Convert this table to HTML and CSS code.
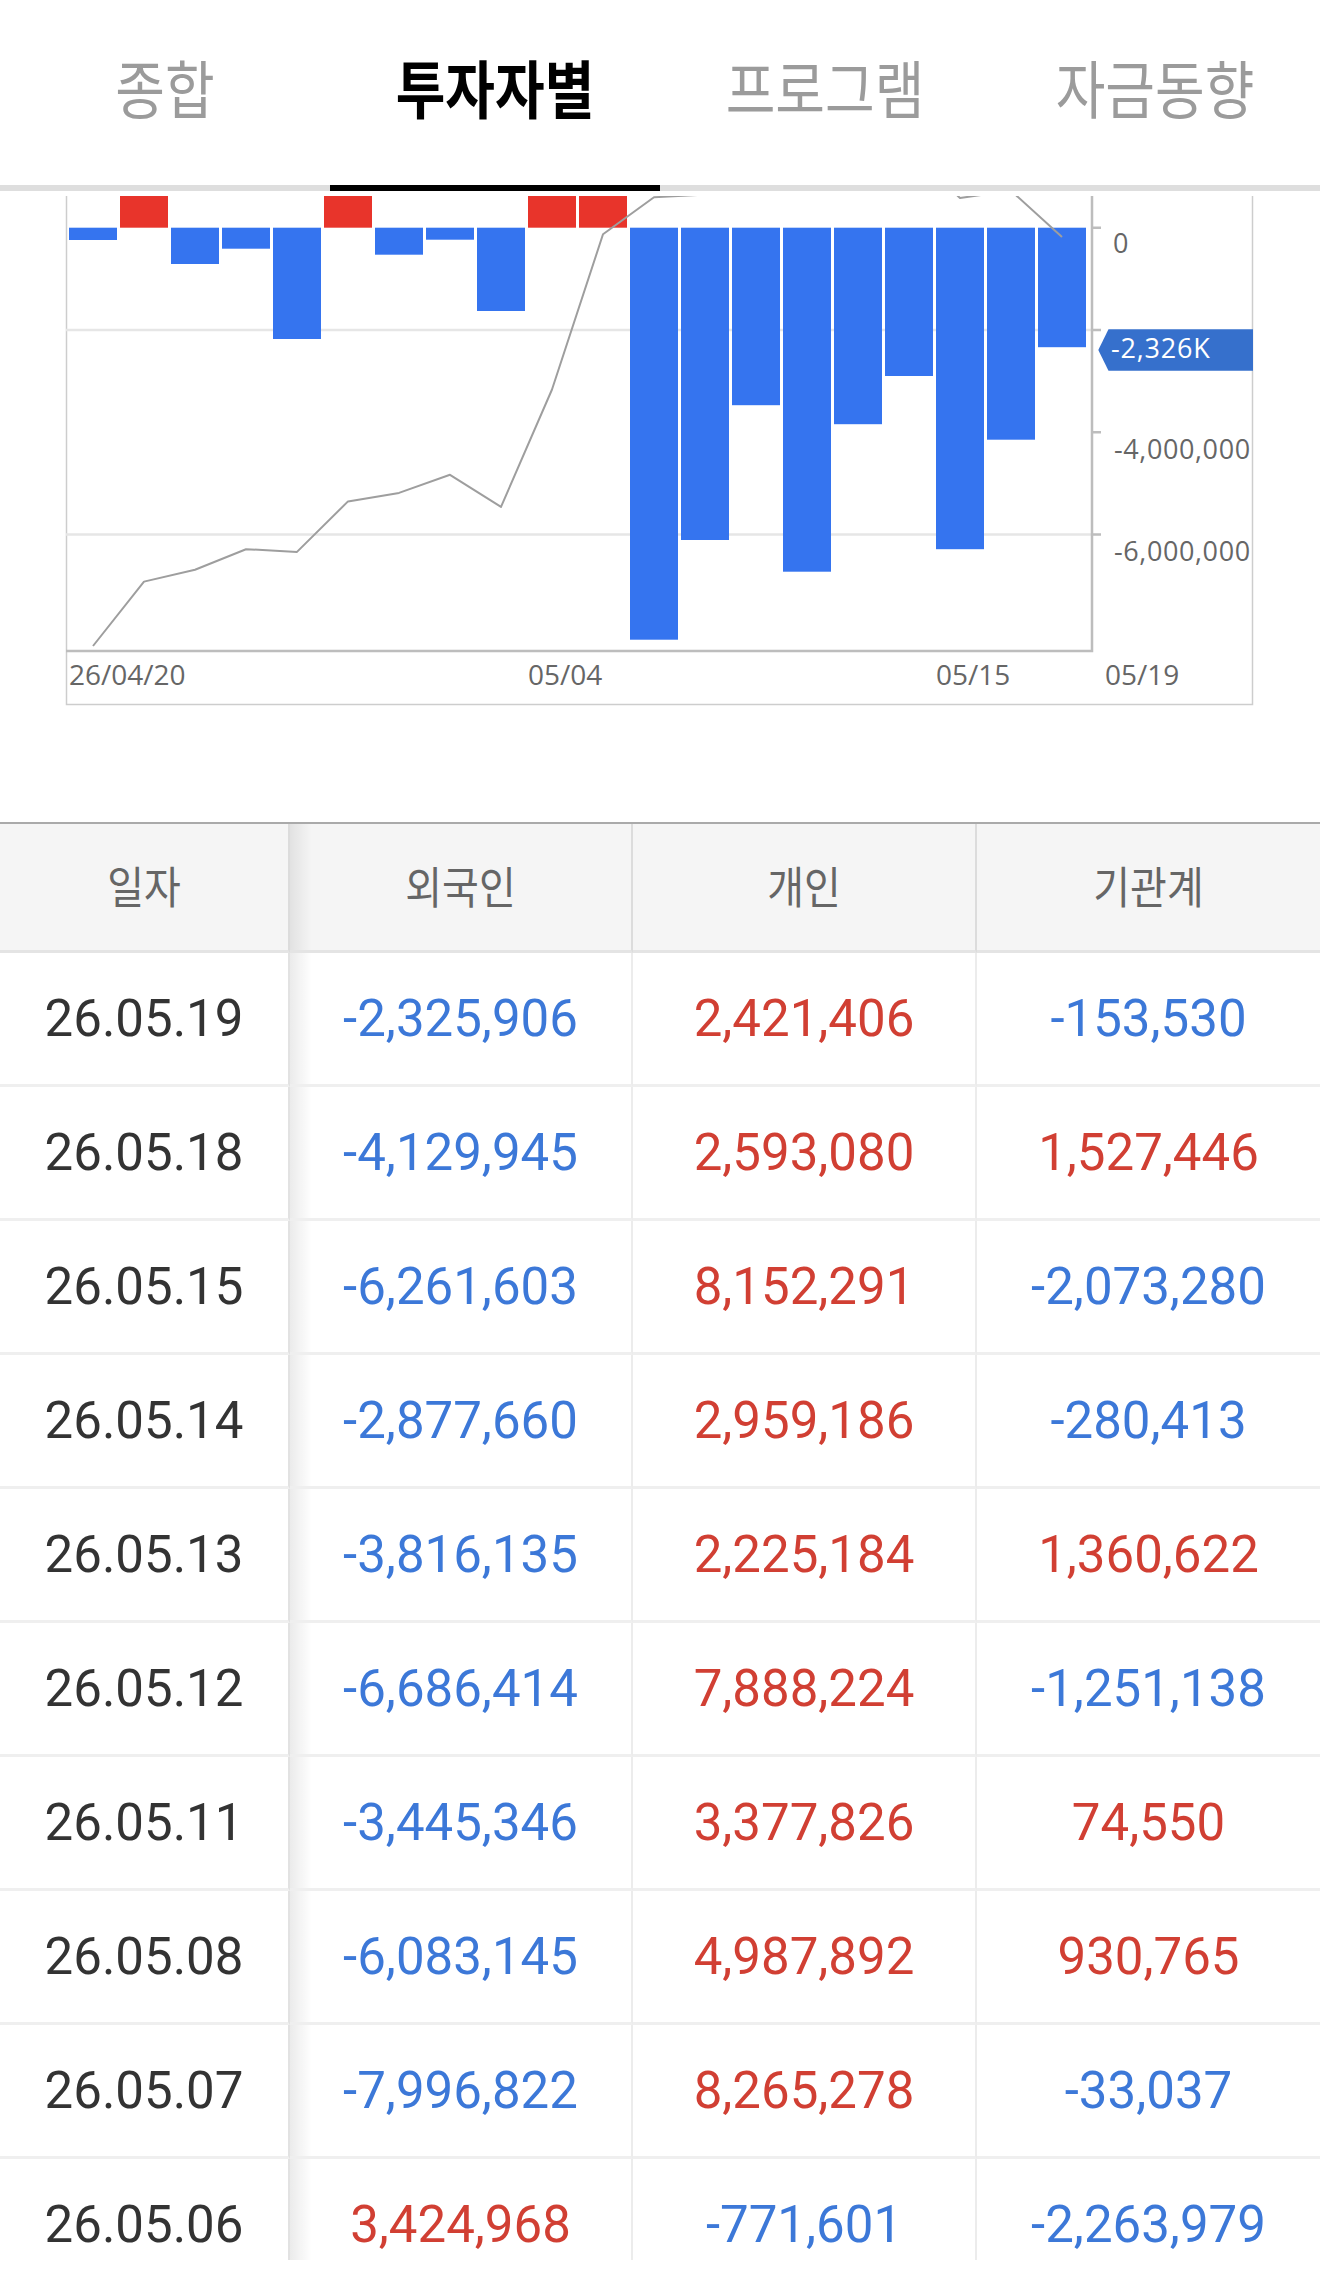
FILE: index.html
```html
<!DOCTYPE html>
<html lang="ko">
<head>
<meta charset="utf-8">
<title>투자자별</title>
<link rel="stylesheet" href="styles.css">
</head>
<body>
<nav class="tabs">
  <div class="tab"><span>종합</span></div>
  <div class="tab active"><span>투자자별</span></div>
  <div class="tab"><span>프로그램</span></div>
  <div class="tab"><span>자금동향</span></div>
</nav>
<div class="track"><div class="indicator"></div></div>

<svg class="chart" viewBox="0 196 1320 626" xmlns="http://www.w3.org/2000/svg">
  <path class="box" d="M66.5 190 V704.5 H1252.5 V190"/>
  <path class="gridline" d="M66 330 H1092 M66 534.6 H1092"/>
  <g class="bars">
    <rect class="neg" x="69" y="227.7" width="48" height="12.3"/>
    <rect class="pos" x="120" y="150" width="48" height="77.7"/>
    <rect class="neg" x="171" y="227.7" width="48" height="36.3"/>
    <rect class="neg" x="222" y="227.7" width="48" height="21"/>
    <rect class="neg" x="273" y="227.7" width="48" height="111.3"/>
    <rect class="pos" x="324" y="150" width="48" height="77.7"/>
    <rect class="neg" x="375" y="227.7" width="48" height="27"/>
    <rect class="neg" x="426" y="227.7" width="48" height="12"/>
    <rect class="neg" x="477" y="227.7" width="48" height="83.3"/>
    <rect class="pos" x="528" y="150" width="48" height="77.7"/>
    <rect class="pos" x="579" y="150" width="48" height="77.7"/>
    <rect class="neg" x="630" y="227.7" width="48" height="412"/>
    <rect class="neg" x="681" y="227.7" width="48" height="312.3"/>
    <rect class="neg" x="732" y="227.7" width="48" height="177.5"/>
    <rect class="neg" x="783" y="227.7" width="48" height="344"/>
    <rect class="neg" x="834" y="227.7" width="48" height="196.5"/>
    <rect class="neg" x="885" y="227.7" width="48" height="148.3"/>
    <rect class="neg" x="936" y="227.7" width="48" height="321.5"/>
    <rect class="neg" x="987" y="227.7" width="48" height="212"/>
    <rect class="neg" x="1038" y="227.7" width="48" height="119.5"/>
  </g>
  <polyline class="trend" points="93,646 144,581.6 195,569.7 246,549.2 297,551.9 348,501.4 399,492.9 450,474.8 501,506.9 552,389.5 603,234.3 654,197.3 705,194.6 756,150 807,165 858,140 909,150 960,198 1011,190.7 1062,237"/>
  <path class="axis" d="M1092 190 V651 H66"/>
  <path class="tick" d="M1092 227.7 H1101 M1092 330 H1101 M1092 432.3 H1101 M1092 534.6 H1101"/>
  <text class="ylabel" x="1113" y="253">0</text>
  <text class="ylabel" x="1114" y="459">-4,000,000</text>
  <text class="ylabel" x="1114" y="561">-6,000,000</text>
  <polygon class="flag" points="1098.3,350 1108.5,329.3 1253,329.3 1253,370.7 1108.5,370.7"/>
  <text class="flag-text" x="1111" y="358">-2,326K</text>
  <text class="xlabel" x="69" y="685">26/04/20</text>
  <text class="xlabel" x="528" y="685">05/04</text>
  <text class="xlabel" x="936" y="685">05/15</text>
  <text class="xlabel" x="1105" y="685">05/19</text>
</svg>

<section class="grid-table">
  <div class="row head">
    <div class="cell c1"><span>일자</span></div>
    <div class="cell c2"><span>외국인</span></div>
    <div class="cell c3"><span>개인</span></div>
    <div class="cell c4"><span>기관계</span></div>
  </div>
  <div class="row">
    <div class="cell c1 date">26.05.19</div>
    <div class="cell c2 down">-2,325,906</div>
    <div class="cell c3 up">2,421,406</div>
    <div class="cell c4 down">-153,530</div>
  </div>
  <div class="row">
    <div class="cell c1 date">26.05.18</div>
    <div class="cell c2 down">-4,129,945</div>
    <div class="cell c3 up">2,593,080</div>
    <div class="cell c4 up">1,527,446</div>
  </div>
  <div class="row">
    <div class="cell c1 date">26.05.15</div>
    <div class="cell c2 down">-6,261,603</div>
    <div class="cell c3 up">8,152,291</div>
    <div class="cell c4 down">-2,073,280</div>
  </div>
  <div class="row">
    <div class="cell c1 date">26.05.14</div>
    <div class="cell c2 down">-2,877,660</div>
    <div class="cell c3 up">2,959,186</div>
    <div class="cell c4 down">-280,413</div>
  </div>
  <div class="row">
    <div class="cell c1 date">26.05.13</div>
    <div class="cell c2 down">-3,816,135</div>
    <div class="cell c3 up">2,225,184</div>
    <div class="cell c4 up">1,360,622</div>
  </div>
  <div class="row">
    <div class="cell c1 date">26.05.12</div>
    <div class="cell c2 down">-6,686,414</div>
    <div class="cell c3 up">7,888,224</div>
    <div class="cell c4 down">-1,251,138</div>
  </div>
  <div class="row">
    <div class="cell c1 date">26.05.11</div>
    <div class="cell c2 down">-3,445,346</div>
    <div class="cell c3 up">3,377,826</div>
    <div class="cell c4 up">74,550</div>
  </div>
  <div class="row">
    <div class="cell c1 date">26.05.08</div>
    <div class="cell c2 down">-6,083,145</div>
    <div class="cell c3 up">4,987,892</div>
    <div class="cell c4 up">930,765</div>
  </div>
  <div class="row">
    <div class="cell c1 date">26.05.07</div>
    <div class="cell c2 down">-7,996,822</div>
    <div class="cell c3 up">8,265,278</div>
    <div class="cell c4 down">-33,037</div>
  </div>
  <div class="row">
    <div class="cell c1 date">26.05.06</div>
    <div class="cell c2 up">3,424,968</div>
    <div class="cell c3 down">-771,601</div>
    <div class="cell c4 down">-2,263,979</div>
  </div>
</section>
</body>
</html>
```

FILE: styles.css
```css
* {
  box-sizing: border-box;
}

html,
body {
  margin: 0;
  padding: 0;
  background: #fff;
}

body {
  width: 1320px;
  font-family: "Noto Sans CJK KR", "Noto Sans", sans-serif;
}

/* tabs */
.tabs {
  display: grid;
  grid-template-columns: repeat(4, 1fr);
  height: 185px;
  padding-bottom: 14px;
  align-items: center;
}

.tab {
  text-align: center;
  font-size: 54px;
  line-height: 1;
  color: #9b9b9b;
  font-weight: 400;
}

.tab span {
  display: inline-block;
  transform: scaleY(1.16);
}

.tab.active {
  color: #000;
  font-weight: 700;
}

.track {
  display: grid;
  grid-template-columns: repeat(4, 1fr);
  height: 6px;
  background: #dedede;
}

.indicator {
  grid-column: 2;
  background: #000;
}

/* chart */
.chart {
  display: block;
  margin-top: 5px;
  width: 1320px;
  height: 626px;
}

.box {
  fill: none;
  stroke: #cdcdcd;
  stroke-width: 1.5;
}

.gridline {
  fill: none;
  stroke: #e6e6e6;
  stroke-width: 2.5;
}

.bars .neg {
  fill: #3574ef;
}

.bars .pos {
  fill: #e8342b;
}

.trend {
  fill: none;
  stroke: #9e9e9e;
  stroke-width: 2;
  stroke-linejoin: round;
}

.axis {
  fill: none;
  stroke: #bdbdbd;
  stroke-width: 2.5;
}

.tick {
  fill: none;
  stroke: #bdbdbd;
  stroke-width: 2.5;
}

.ylabel,
.xlabel {
  font-family: "Open Sans", "DejaVu Sans", sans-serif;
  fill: #666;
}

.ylabel {
  font-size: 27px;
  letter-spacing: 0.6px;
}

.xlabel {
  font-size: 28px;
}

.flag {
  fill: #3670cc;
}

.flag-text {
  font-family: "Open Sans", "DejaVu Sans", sans-serif;
  font-size: 27px;
  letter-spacing: 0.8px;
  fill: #fff;
}

/* table */
.grid-table {
  height: 1438px;
  overflow: hidden;
  border-top: 2px solid #aaa;
}

.row {
  display: grid;
  grid-template-columns: 290px 343px 344px 343px;
}

.cell {
  display: flex;
  align-items: center;
  justify-content: center;
  height: 134px;
  border-bottom: 3px solid #efefef;
  border-right: 2px solid #ececec;
  font-family: Roboto, "Liberation Sans", sans-serif;
  font-size: 51px;
  color: #333;
}

.cell.c4 {
  border-right: 0;
}

.cell.c2 {
  background-image: linear-gradient(90deg, rgba(0, 0, 0, 0.08), rgba(0, 0, 0, 0) 22px);
}

.cell.c1 {
  border-right-color: #e2e2e2;
}

.head .cell {
  height: 129px;
  background-color: #f5f5f5;
  border-bottom-color: #e4e4e4;
  border-right-color: #dcdcdc;
  font-family: "Noto Sans CJK KR", "Noto Sans", sans-serif;
  font-size: 40px;
  color: #666;
  padding-bottom: 4px;
}

.head .cell span {
  display: inline-block;
  transform: scaleY(1.12);
}

.date {
  color: #333;
}

.up {
  color: #d13f33;
}

.down {
  color: #3c78d8;
}
```
